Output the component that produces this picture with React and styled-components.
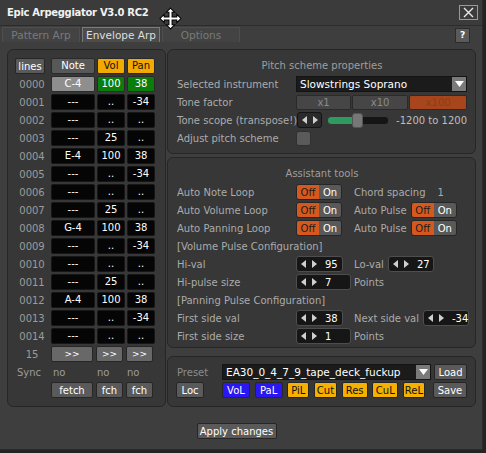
import React from 'react';
import styled, { createGlobalStyle } from 'styled-components';

const Global = createGlobalStyle`
  html, body { margin: 0; padding: 0; background: #232323; }
  body { font-family: "DejaVu Sans", "Liberation Sans", sans-serif; font-size: 10px; }
  * { box-sizing: border-box; }
`;

const Window = styled.div`
  position: relative;
  width: 483px;
  height: 450px;
  background: #3e3e3e;
  border-right: 1px solid #2b2b2b;
  border-bottom: 1px solid #2b2b2b;
  display: flex;
  flex-direction: column;
`;

const TitleBar = styled.div`
  height: 26px;
  border-bottom: 1px solid #2c2c2c;
  background: #3b3b3b;
  display: flex;
  align-items: center;
  justify-content: space-between;
  padding: 0 4px 0 7px;
`;

const Title = styled.div`
  color: #f2f2f2;
  font-weight: bold;
  font-size: 10px;
  letter-spacing: -0.3px;
`;

const CloseBtn = styled.div`
  width: 19px;
  height: 15px;
  border: 1px solid #9a9a9a;
  background: #3c3c3c;
  display: flex;
  align-items: center;
  justify-content: center;
`;

const Cursor = styled.svg`
  position: absolute;
  left: 159px;
  top: 7px;
`;

const TabBar = styled.div`
  height: 16px;
  display: flex;
  align-items: flex-end;
  gap: 2px;
  padding: 0 12px 0 2px;
`;

const Tab = styled.div`
  width: 78px;
  height: 15px;
  border: 1px solid ${p => (p.$active ? '#7a7a7a' : '#4e4e4e')};
  border-bottom: none;
  background: ${p => (p.$active ? '#4c4c4c' : '#434343')};
  color: ${p => (p.$active ? '#dedede' : '#7a7a7a')};
  font-size: 10.5px;
  display: flex;
  align-items: center;
  justify-content: center;
`;

const HelpBtn = styled.div`
  margin-left: auto;
  align-self: center;
  margin-top: 2px;
  width: 15px;
  height: 15px;
  background: #5a5a5a;
  border: 1px solid #2c2c2c;
  color: #fff;
  font-weight: bold;
  font-size: 9px;
  display: flex;
  align-items: center;
  justify-content: center;
`;

const Main = styled.div`
  display: flex;
  gap: 1px;
  padding: 7px 0 0 7px;
`;

const Panel = styled.div`
  background: #373737;
  border: 1px solid #262626;
  border-radius: 6px;
`;

const LeftPanel = styled(Panel)`
  width: 159px;
  padding: 8px 10px 6px 7px;
`;

const Grid = styled.div`
  display: grid;
  grid-template-columns: 34px 44px 28px 28px;
  grid-auto-rows: 16px;
  column-gap: 2px;
  row-gap: 2px;
`;

const LineNo = styled.div`
  color: #9c9c9c;
  display: flex;
  align-items: center;
  justify-content: center;
`;

const SyncText = styled.div`
  color: #9c9c9c;
  display: flex;
  align-items: center;
  padding-left: ${p => p.$pl ?? 2}px;
`;

const Cell = styled.div`
  background: ${p => p.$bg || '#050505'};
  border: 1px solid ${p => p.$border || '#161616'};
  border-radius: 2px;
  color: ${p => p.$fg || '#ffffff'};
  display: flex;
  align-items: center;
  justify-content: center;
  line-height: 1;
`;

const Btn = styled.div`
  width: ${p => (p.$w ? `${p.$w}px` : 'auto')};
  height: 16px;
  border: 1px solid #262626;
  border-radius: 2px;
  background: ${p => p.$bg || '#5a5a5a'};
  color: ${p => p.$fg || '#ffffff'};
  font-size: ${p => p.$fs || 10}px;
  display: flex;
  align-items: center;
  justify-content: center;
  margin-left: ${p => p.$ml || 0}px;
  justify-self: start;
`;

const RightCol = styled.div`
  width: 309px;
  display: flex;
  flex-direction: column;
`;

const PitchPanel = styled(Panel)`
  height: 105px;
  padding: 8px 8px 0 9px;
  display: flex;
  flex-direction: column;
  gap: 2px;
`;

const AssistPanel = styled(Panel)`
  margin-top: 3px;
  height: 191px;
  padding: 8px 8px 0 9px;
  display: flex;
  flex-direction: column;
  gap: 2px;
`;

const PresetPanel = styled(Panel)`
  margin-top: 8px;
  height: 51px;
  padding: 7px 8px 0 9px;
  display: flex;
  flex-direction: column;
  gap: 2px;
`;

const PanelTitle = styled.div`
  height: 16px;
  line-height: 16px;
  text-align: center;
  color: #9e9e9e;
`;

const Row = styled.div`
  height: 16px;
  display: flex;
  align-items: center;
`;

const Label = styled.div`
  width: ${p => p.$w || 119}px;
  flex-shrink: 0;
  color: ${p => p.$c || '#ababab'};
  white-space: nowrap;
`;

const Text = styled.span`
  color: ${p => p.$c || '#ababab'};
  margin-left: ${p => p.$ml || 0}px;
  white-space: nowrap;
`;

const Dropdown = styled.div`
  width: ${p => p.$w}px;
  height: 16px;
  background: #1b1b1b;
  border: 1px solid #141414;
  display: flex;
  align-items: center;
  color: #fff;
  padding-left: 3px;
`;

const DropText = styled.div`
  flex: 1;
  white-space: nowrap;
  line-height: 14px;
  font-size: 10.5px;
`;

const DropArrow = styled.div`
  width: 14px;
  height: 14px;
  background: #7a7a7a;
  display: flex;
  align-items: center;
  justify-content: center;
`;

const Segmented = styled.div`
  width: 171px;
  height: 15px;
  display: flex;
  gap: 1px;
`;

const Seg = styled.div`
  flex: ${p => p.$flex || 1};
  border: 1px solid #2a2a2a;
  border-radius: 2px;
  background: ${p => (p.$on ? '#a7461c' : '#464646')};
  color: ${p => (p.$on ? '#8d3c19' : '#8a8a8a')};
  display: flex;
  align-items: center;
  justify-content: center;
`;

const SpinBox = styled.div`
  width: ${p => p.$w}px;
  height: 16px;
  border: 1px solid ${p => p.$border || '#4e4e4e'};
  border-radius: 3px;
  background: ${p => p.$bg || '#161616'};
  display: flex;
  align-items: center;
  padding-left: 3px;
  color: #fff;
  margin-left: ${p => p.$ml || 0}px;
`;

const Arrows = styled.div`
  width: 25px;
  flex-shrink: 0;
  display: flex;
  align-items: center;
  gap: 6px;
  padding-left: 1px;
`;

const Slider = styled.div`
  position: relative;
  width: 64px;
  height: 7px;
  margin-left: 6px;
  background: #151515;
  border-radius: 3px;
`;

const SliderFill = styled.div`
  height: 100%;
  background: #2f9a5f;
  border-radius: 3px 0 0 3px;
`;

const SliderThumb = styled.div`
  position: absolute;
  top: -4px;
  width: 11px;
  height: 15px;
  background: #777;
  border: 1px solid #555;
  border-radius: 3px;
`;

const Check = styled.div`
  width: 15px;
  height: 15px;
  background: #5a5a5a;
  border: 1px solid #303030;
  border-radius: 3px;
`;

const AssistRow = styled.div`
  height: 16px;
  display: grid;
  grid-template-columns: 119px 58px auto auto;
  align-items: center;
  justify-content: start;
`;

const ToggleBox = styled.div`
  width: 46px;
  height: 16px;
  display: flex;
  border: 1px solid #262626;
  border-radius: 3px;
  overflow: hidden;
  margin-left: ${p => p.$ml || 0}px;
`;

const ToggleHalf = styled.div`
  flex: 1;
  background: ${p => (p.$off ? '#d5591f' : '#595959')};
  color: ${p => (p.$off ? '#1d1d1d' : '#ffffff')};
  display: flex;
  align-items: center;
  justify-content: center;
`;

const PresetRow = styled.div`
  height: 16px;
  display: grid;
  grid-template-columns: 45px 1fr auto;
  align-items: center;
`;

const FlagGroup = styled.div`
  display: flex;
  justify-content: space-between;
  margin-right: 8px;
`;

const Footer = styled.div`
  display: flex;
  justify-content: center;
  padding: 16px 9px 0 0;
`;

const Tri = ({ dir, color = '#cfcfcf' }) => (
  <svg width="5" height="8" viewBox="0 0 5 8">
    {dir === 'l' ? (
      <polygon points="5,0 0,4 5,8" fill={color} />
    ) : (
      <polygon points="0,0 5,4 0,8" fill={color} />
    )}
  </svg>
);

const Down = () => (
  <svg width="9" height="6" viewBox="0 0 9 6">
    <polygon points="0,0 9,0 4.5,6" fill="#fff" />
  </svg>
);

const Spin = ({ w, value, ml }) => (
  <SpinBox $w={w} $ml={ml}>
    <Arrows>
      <Tri dir="l" />
      <Tri dir="r" />
    </Arrows>
    {value}
  </SpinBox>
);

const Toggle = ({ ml }) => (
  <ToggleBox $ml={ml}>
    <ToggleHalf $off>Off</ToggleHalf>
    <ToggleHalf>On</ToggleHalf>
  </ToggleBox>
);

const rows = [
  ['C-4', '100', '38'],
  ['---', '..', '-34'],
  ['---', '..', '..'],
  ['---', '25', '..'],
  ['E-4', '100', '38'],
  ['---', '..', '-34'],
  ['---', '..', '..'],
  ['---', '25', '..'],
  ['G-4', '100', '38'],
  ['---', '..', '-34'],
  ['---', '..', '..'],
  ['---', '25', '..'],
  ['A-4', '100', '38'],
  ['---', '..', '-34'],
  ['---', '..', '..'],
];

const flags = [
  ['VoL', 28, '#2a17f2', '#fff'],
  ['PaL', 28, '#2a17f2', '#fff'],
  ['PiL', 22, '#f6b000', '#111'],
  ['Cut', 23, '#f6b000', '#111'],
  ['Res', 26, '#f6b000', '#111'],
  ['CuL', 26, '#f6b000', '#111'],
  ['ReL', 22, '#f6b000', '#111'],
];

export default function App() {
  return (
    <>
      <Global />
      <Window>
        <TitleBar>
          <Title>Epic Arpeggiator V3.0 RC2</Title>
          <CloseBtn>
            <svg width="11" height="11" viewBox="0 0 11 11">
              <path d="M1 1 L10 10 M10 1 L1 10" stroke="#e8e8e8" strokeWidth="1.4" />
            </svg>
          </CloseBtn>
        </TitleBar>
        <Cursor width="23" height="23" viewBox="0 0 22 22">
          <polygon
            points="11,1 15,5 12.5,5 12.5,9.5 17,9.5 17,7 21,11 17,15 17,12.5 12.5,12.5 12.5,17 15,17 11,21 7,17 9.5,17 9.5,12.5 5,12.5 5,15 1,11 5,7 5,9.5 9.5,9.5 9.5,5 7,5"
            fill="#fff"
            stroke="#000"
            strokeWidth="1"
          />
        </Cursor>
        <TabBar>
          <Tab>Pattern Arp</Tab>
          <Tab $active>Envelope Arp</Tab>
          <Tab>Options</Tab>
          <HelpBtn>?</HelpBtn>
        </TabBar>

        <Main>
          <LeftPanel>
            <Grid>
              <Btn $w={30}>lines</Btn>
              <Cell $bg="#585858" $border="#2a2a2a">Note</Cell>
              <Cell $bg="#f2a900" $border="#2a2a2a" $fg="#111">Vol</Cell>
              <Cell $bg="#f2a900" $border="#2a2a2a" $fg="#111">Pan</Cell>
              {rows.map((r, i) => (
                <React.Fragment key={i}>
                  <LineNo>{String(i).padStart(4, '0')}</LineNo>
                  <Cell $bg={i === 0 ? '#8e8e8e' : undefined} $border={i === 0 ? '#2a2a2a' : undefined}>{r[0]}</Cell>
                  <Cell $bg={i === 0 ? '#0b7d0b' : undefined} $border={i === 0 ? '#2a2a2a' : undefined}>{r[1]}</Cell>
                  <Cell $bg={i === 0 ? '#0b7d0b' : undefined} $border={i === 0 ? '#2a2a2a' : undefined}>{r[2]}</Cell>
                </React.Fragment>
              ))}
              <LineNo>15</LineNo>
              <Btn $w={42} $bg="#686868" $fs={9}>&gt;&gt;</Btn>
              <Btn $w={27} $bg="#686868" $fs={9} $ml={-1}>&gt;&gt;</Btn>
              <Btn $w={27} $bg="#686868" $fs={9} $ml={-1}>&gt;&gt;</Btn>
              <SyncText $pl={2}>Sync</SyncText>
              <SyncText>no</SyncText>
              <SyncText $pl={0}>no</SyncText>
              <SyncText $pl={0}>no</SyncText>
              <div />
              <Btn $w={42}>fetch</Btn>
              <Btn $w={27} $ml={-1}>fch</Btn>
              <Btn $w={27} $ml={-1}>fch</Btn>
            </Grid>
          </LeftPanel>

          <RightCol>
            <PitchPanel>
              <PanelTitle>Pitch scheme properties</PanelTitle>
              <Row>
                <Label>Selected instrument</Label>
                <Dropdown $w={171}>
                  <DropText>Slowstrings Soprano</DropText>
                  <DropArrow><Down /></DropArrow>
                </Dropdown>
              </Row>
              <Row>
                <Label>Tone factor</Label>
                <Segmented>
                  <Seg>x1</Seg>
                  <Seg $flex={1.02}>x10</Seg>
                  <Seg $on $flex={1.05}>x100</Seg>
                </Segmented>
              </Row>
              <Row>
                <Label>Tone scope (transpose!)</Label>
                <SpinBox $w={25} $bg="#2a2a2a" $border="#141414" $ml={1}>
                  <Arrows>
                    <Tri dir="l" />
                    <Tri dir="r" />
                  </Arrows>
                </SpinBox>
                <Slider>
                  <SliderFill style={{ width: '44%' }} />
                  <SliderThumb style={{ left: '40%' }} />
                </Slider>
                <Text $c="#bdbdbd" $ml={8}>-1200 to 1200</Text>
              </Row>
              <Row>
                <Label>Adjust pitch scheme</Label>
                <Check />
              </Row>
            </PitchPanel>

            <AssistPanel>
              <PanelTitle>Assistant tools</PanelTitle>
              <AssistRow>
                <Label>Auto Note Loop</Label>
                <Toggle />
                <Text>Chord spacing</Text>
                <Text $ml={12}>1</Text>
              </AssistRow>
              <AssistRow>
                <Label>Auto Volume Loop</Label>
                <Toggle />
                <Text>Auto Pulse</Text>
                <Toggle ml={4} />
              </AssistRow>
              <AssistRow>
                <Label>Auto Panning Loop</Label>
                <Toggle />
                <Text>Auto Pulse</Text>
                <Toggle ml={4} />
              </AssistRow>
              <Row>
                <Label $w={250}>[Volume Pulse Configuration]</Label>
              </Row>
              <AssistRow>
                <Label>Hi-val</Label>
                <Spin w={47} value="95" />
                <Text>Lo-val</Text>
                <Spin w={46} value="27" ml={4} />
              </AssistRow>
              <AssistRow>
                <Label>Hi-pulse size</Label>
                <Spin w={55} value="7" />
                <Text>Points</Text>
              </AssistRow>
              <Row>
                <Label $w={250}>[Panning Pulse Configuration]</Label>
              </Row>
              <AssistRow>
                <Label>First side val</Label>
                <Spin w={47} value="38" />
                <Text>Next side val</Text>
                <Spin w={46} value="-34" ml={4} />
              </AssistRow>
              <AssistRow>
                <Label>First side size</Label>
                <Spin w={55} value="1" />
                <Text>Points</Text>
              </AssistRow>
            </AssistPanel>

            <PresetPanel>
              <PresetRow>
                <Label $w={45} $c="#8c8c8c">Preset</Label>
                <Dropdown $w={209}>
                  <DropText>EA30_0_4_7_9_tape_deck_fuckup</DropText>
                  <DropArrow><Down /></DropArrow>
                </Dropdown>
                <Btn $w={33} $ml={3}>Load</Btn>
              </PresetRow>
              <PresetRow>
                <Btn $w={28} $ml={-1}>Loc</Btn>
                <FlagGroup>
                  {flags.map(([t, w, bg, fg]) => (
                    <Btn key={t} $w={w} $bg={bg} $fg={fg} $fs={10}>{t}</Btn>
                  ))}
                </FlagGroup>
                <Btn $w={34}>Save</Btn>
              </PresetRow>
            </PresetPanel>
          </RightCol>
        </Main>

        <Footer>
          <Btn $w={80}>Apply changes</Btn>
        </Footer>
      </Window>
    </>
  );
}
